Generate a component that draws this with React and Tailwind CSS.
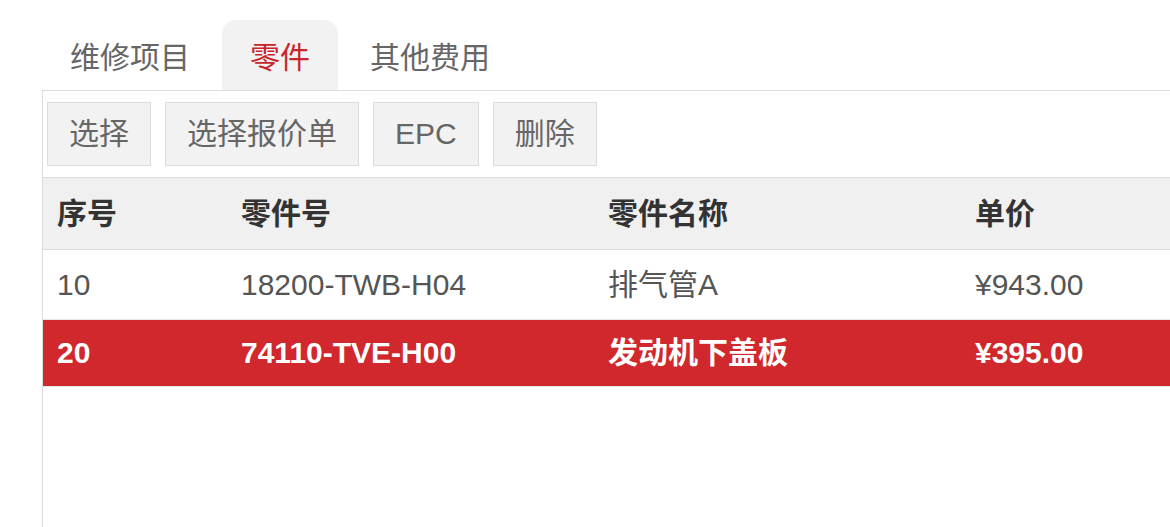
const TABS = ['维修项目', '零件', '其他费用'];
const ACTIONS = ['选择', '选择报价单', 'EPC', '删除'];
const PARTS = [
  { seq: '10', no: '18200-TWB-H04', name: '排气管A', price: '¥943.00' },
  { seq: '20', no: '74110-TVE-H00', name: '发动机下盖板', price: '¥395.00', selected: true },
];

export default function App() {
  const active = 1;
  return (
    <div className="h-[527px] w-full overflow-hidden bg-white font-['Liberation_Sans','Noto_Sans_CJK_SC',sans-serif] text-[30px] leading-none">
      {/* tabs */}
      <div className="flex gap-[4px] pl-[42px] pt-[20px]">
        {TABS.map((t, i) => (
          <div
            key={t}
            className={
              'flex h-[70px] items-center rounded-t-[14px] px-[28px] pt-[5px] ' +
              (i === active ? 'bg-[#f2f2f2] text-[#c9252b]' : 'text-[#666]')
            }
          >
            {t}
          </div>
        ))}
      </div>

      <div className="ml-[42px] border-l border-t border-[#dcdcdc]">
        {/* toolbar */}
        <div className="flex gap-[14px] px-[4px] py-[11px]">
          {ACTIONS.map((a) => (
            <button
              key={a}
              className="h-[64px] border border-[#dcdcdc] bg-[#f2f2f2] px-[21px] text-[30px] text-[#666]"
            >
              {a}
            </button>
          ))}
        </div>

        {/* parts table */}
        <table className="w-[1200px] table-fixed border-collapse text-left">
          <colgroup>
            <col className="w-[184px]" />
            <col className="w-[367px]" />
            <col className="w-[367px]" />
            <col />
          </colgroup>
          <thead>
            <tr className="h-[72px] border-y border-[#dcdcdc] bg-[#f0f0f0] font-bold text-[#333]">
              <th className="pl-[14px] font-bold">序号</th>
              <th className="pl-[14px] font-bold">零件号</th>
              <th className="pl-[14px] font-bold">零件名称</th>
              <th className="pl-[14px] font-bold">单价</th>
            </tr>
          </thead>
          <tbody>
            {PARTS.map((p) => (
              <tr
                key={p.seq}
                className={
                  'border-b ' +
                  (p.selected
                    ? 'h-[67px] border-[#e6e6e6] bg-[#d0282c] font-bold text-white'
                    : 'h-[70px] border-[#e6e6e6] text-[#555]')
                }
              >
                <td className="pl-[14px]">{p.seq}</td>
                <td className="pl-[14px]">{p.no}</td>
                <td className="pl-[14px]">{p.name}</td>
                <td className="pl-[14px]">{p.price}</td>
              </tr>
            ))}
          </tbody>
        </table>
        <div className="h-[200px]" />
      </div>
    </div>
  );
}
